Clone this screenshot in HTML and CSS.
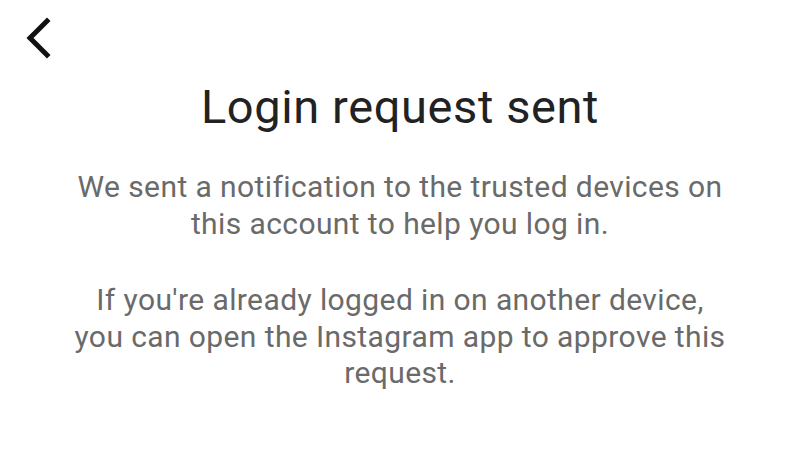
FILE: index.html
```html
<!DOCTYPE html>
<html lang="en">
<head>
    <meta charset="UTF-8">
    <meta name="viewport" content="width=device-width, initial-scale=1.0">
    <title>Login request sent</title>
    <link rel="stylesheet" href="styles.css">
</head>
<body>
    <header class="top-bar">
        <a class="back" href="#" aria-label="Back">
            <svg width="32" height="44" viewBox="0 0 32 44">
                <polyline points="22,4 5,21 22,38" fill="none" stroke="#111" stroke-width="5" stroke-linecap="square" stroke-linejoin="miter"/>
            </svg>
        </a>
    </header>

    <main class="content">
        <h1 class="title">Login request sent</h1>
        <p class="info">We sent a notification to the trusted devices on this account to help you log in.</p>
        <p class="info second">If you're already logged in on another device,<br> you can open the Instagram app to approve this request.</p>
    </main>
</body>
</html>
```

FILE: styles.css
```css
body {
    margin: 0;
    font-family: Roboto, "Liberation Sans", sans-serif;
    background-color: #fff;
    color: #222;
}
.top-bar {
    height: 79px;
    display: flex;
    align-items: flex-start;
}
.back {
    display: block;
    margin: 17px 0 0 25px;
}
.back svg {
    display: block;
}
.content {
    text-align: center;
    padding: 0 40px;
}
.title {
    margin: 0;
    font-size: 47px;
    line-height: 56px;
    font-weight: 400;
    letter-spacing: 0.6px;
}
.info {
    margin: 34px auto 0;
    max-width: 672px;
    font-size: 30px;
    line-height: 36.5px;
    letter-spacing: 0.4px;
    color: #6a6a6a;
}
.info.second {
    margin-top: 40px;
}
```
